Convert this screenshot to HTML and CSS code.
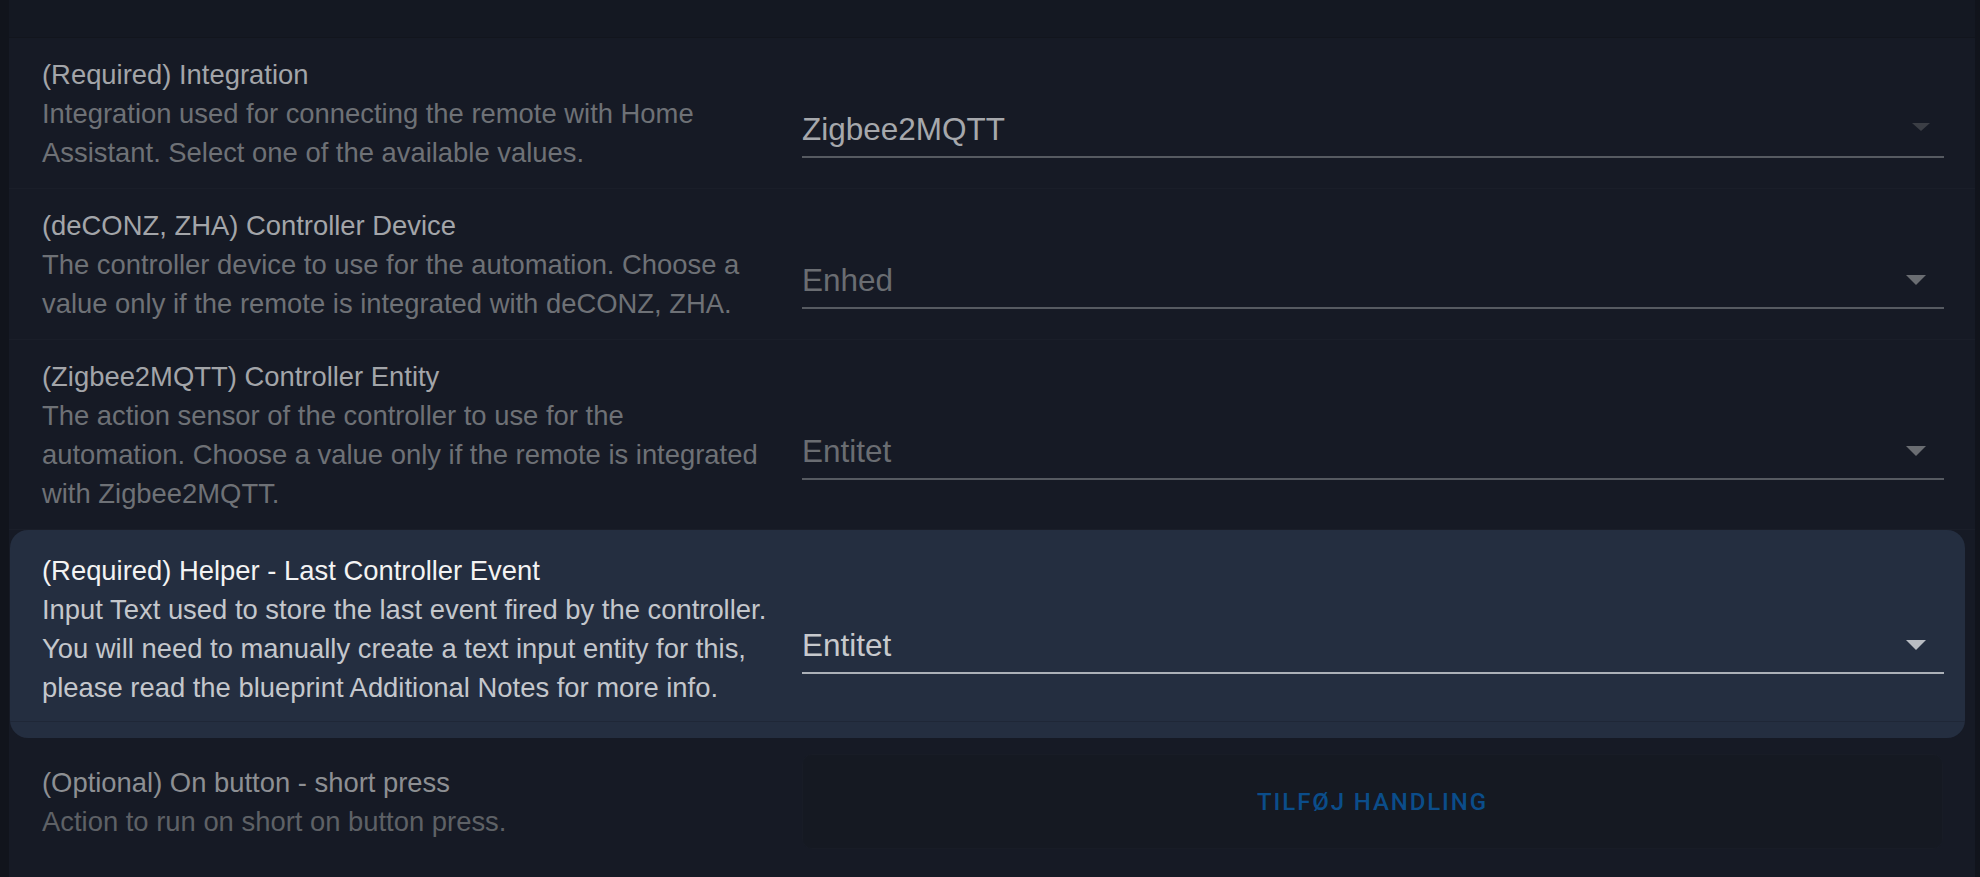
FILE: index.html
```html
<!DOCTYPE html>
<html lang="da">
<head>
    <meta charset="UTF-8">
    <meta name="viewport" content="width=device-width, initial-scale=1.0">
    <title>Blueprint input</title>
    <link rel="stylesheet" href="styles.css">
</head>
<body>
    <div class="panel">
        <div class="top-strip"></div>

        <div class="row">
            <div class="info">
                <div class="title">(Required) Integration</div>
                <div class="desc">Integration used for connecting the remote with Home Assistant. Select one of the available values.</div>
            </div>
            <div class="field">
                <span class="value">Zigbee2MQTT</span>
                <span class="arrow arrow-dim"></span>
            </div>
        </div>

        <div class="row">
            <div class="info">
                <div class="title">(deCONZ, ZHA) Controller Device</div>
                <div class="desc">The controller device to use for the automation. Choose a value only if the remote is integrated with deCONZ, ZHA.</div>
            </div>
            <div class="field">
                <span class="value placeholder">Enhed</span>
                <span class="arrow"></span>
            </div>
        </div>

        <div class="row">
            <div class="info">
                <div class="title">(Zigbee2MQTT) Controller Entity</div>
                <div class="desc">The action sensor of the controller to use for the automation. Choose a value only if the remote is integrated with Zigbee2MQTT.</div>
            </div>
            <div class="field">
                <span class="value placeholder">Entitet</span>
                <span class="arrow"></span>
            </div>
        </div>

        <div class="card">
            <div class="row">
                <div class="info">
                    <div class="title">(Required) Helper - Last Controller Event</div>
                    <div class="desc">Input Text used to store the last event fired by the controller. You will need to manually create a text input entity for this, please read the blueprint Additional Notes for more info.</div>
                </div>
                <div class="field">
                    <span class="value">Entitet</span>
                    <span class="arrow"></span>
                </div>
            </div>
        </div>

        <div class="row row-action">
            <div class="info">
                <div class="title">(Optional) On button - short press</div>
                <div class="desc">Action to run on short on button press.</div>
            </div>
            <div class="action-box">
                <button class="add-btn">Tilføj handling</button>
            </div>
        </div>
    </div>
</body>
</html>
```

FILE: styles.css
```css
body {
    margin: 0;
    background-color: #11141c;
    font-family: "Liberation Sans", Arial, sans-serif;
    overflow: hidden;
}
.panel {
    margin: 0 5px 0 9px;
    height: 877px;
    background-color: #161a25;
    overflow: hidden;
}
.top-strip {
    height: 37px;
    background-color: #141822;
    border-bottom: 1px solid #12151d;
}
.row {
    display: flex;
    align-items: center;
    gap: 30px;
    padding: 17px 31px 16px 33px;
    border-bottom: 1px solid #1a1e29;
}
.info {
    width: 730px;
    flex-shrink: 0;
    font-size: 27.4px;
    line-height: 39px;
}
.title {
    color: #a3a5a9;
}
.desc {
    color: #6e7176;
}
.field {
    flex: 1;
    height: 89px;
    box-sizing: border-box;
    display: flex;
    align-items: flex-end;
    justify-content: space-between;
    padding: 0 18px 7px 0;
    border-bottom: 2px solid #565a61;
}
.value {
    font-size: 31.5px;
    line-height: 39px;
    color: #a6a8ac;
}
.value.placeholder {
    color: #6a6d72;
}
.arrow {
    width: 0;
    height: 0;
    margin-bottom: 15px;
    border-left: 10px solid transparent;
    border-right: 10px solid transparent;
    border-top: 10px solid #6a6d72;
}
.arrow-dim {
    margin-right: -4px;
    border-left-width: 9px;
    border-right-width: 9px;
    border-top: 8px solid #3b3e45;
    margin-bottom: 18px;
}

/* highlighted row */
.card {
    margin: 0 10px 0 1px;
    padding-bottom: 16px;
    background-color: #242e40;
    border-radius: 18px;
}
.card .row {
    padding: 21px 21px 14px 32px;
    border-bottom: 1px solid #1f2737;
}
.card .title {
    color: #f3f3f3;
}
.card .desc {
    color: #c4c7cc;
}
.card .value {
    color: #c7c9cd;
}
.card .field {
    border-bottom-color: #acb1b8;
}
.card .arrow {
    border-top-color: #b9bdc3;
}

.row-action {
    padding-top: 16px;
    border-bottom: none;
}
.row-action .title {
    color: #8d8f93;
}
.row-action .desc {
    color: #5e6166;
}
.action-box {
    flex: 1;
    height: 93px;
    display: flex;
    align-items: center;
    justify-content: center;
    background-color: #151922;
    border: 1px solid #181c26;
    border-radius: 10px;
    margin-right: 1px;
}
.add-btn {
    background: none;
    border: none;
    padding: 0;
    font-family: Roboto, "Liberation Sans", sans-serif;
    font-weight: 500;
    font-size: 24px;
    letter-spacing: 1.9px;
    text-transform: uppercase;
    color: #0b4d8a;
    cursor: pointer;
}
```
